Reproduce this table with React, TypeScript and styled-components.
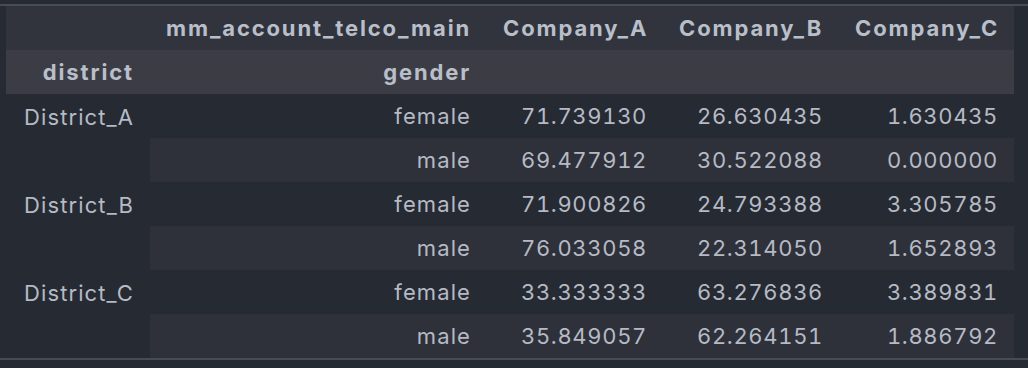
import styled, { createGlobalStyle } from 'styled-components';

const GlobalStyle = createGlobalStyle`
  html, body {
    margin: 0;
    background: #262a33;
  }
`;

type Row = {
  district?: string;
  span?: number;
  gender: string;
  values: string[];
};

const columns = ['Company_A', 'Company_B', 'Company_C'];

const rows: Row[] = [
  { district: 'District_A', span: 2, gender: 'female', values: ['71.739130', '26.630435', '1.630435'] },
  { gender: 'male', values: ['69.477912', '30.522088', '0.000000'] },
  { district: 'District_B', span: 2, gender: 'female', values: ['71.900826', '24.793388', '3.305785'] },
  { gender: 'male', values: ['76.033058', '22.314050', '1.652893'] },
  { district: 'District_C', span: 2, gender: 'female', values: ['33.333333', '63.276836', '3.389831'] },
  { gender: 'male', values: ['35.849057', '62.264151', '1.886792'] },
];

export default function App() {
  return (
    <>
      <GlobalStyle />
      <Output>
        <Frame>
          <Table>
            <colgroup>
              <col style={{ width: 144 }} />
              <col style={{ width: 337 }} />
              <col style={{ width: 176 }} />
              <col style={{ width: 176 }} />
              <col style={{ width: 175 }} />
            </colgroup>
            <thead>
              <HeadRow $tone='top'>
                <HeadCell />
                <HeadCell>mm_account_telco_main</HeadCell>
                {columns.map((c) => (
                  <HeadCell key={c}>{c}</HeadCell>
                ))}
              </HeadRow>
              <HeadRow $tone='names'>
                <HeadCell>district</HeadCell>
                <HeadCell>gender</HeadCell>
                <HeadCell />
                <HeadCell />
                <HeadCell />
              </HeadRow>
            </thead>
            <tbody>
              {rows.map((row, i) => (
                <BodyRow key={i} $striped={i % 2 === 1}>
                  {row.district && <IndexCell rowSpan={row.span}>{row.district}</IndexCell>}
                  <DataCell>{row.gender}</DataCell>
                  {row.values.map((v, j) => (
                    <DataCell key={j} $num>
                      {v}
                    </DataCell>
                  ))}
                </BodyRow>
              ))}
            </tbody>
          </Table>
        </Frame>
      </Output>
    </>
  );
}

const Output = styled.div`
  width: 1028px;
  height: 368px;
  box-sizing: border-box;
  padding-top: 4px;
  font-family: Inter, 'Liberation Sans', sans-serif;
`;

const Frame = styled.div`
  border-top: 2px solid #474b57;
  border-bottom: 2px solid #474b57;
  padding-left: 6px;
`;

const Table = styled.table`
  border-collapse: collapse;
  border-spacing: 0;
  table-layout: fixed;
  width: 1008px;
`;

const HeadRow = styled.tr<{ $tone: 'top' | 'names' }>`
  height: 44px;
  background: ${(p) => (p.$tone === 'top' ? '#31343d' : '#3c3d44')};
`;

const HeadCell = styled.th`
  padding: 0 16px;
  text-align: right;
  font-size: 22px;
  font-weight: 700;
  letter-spacing: 0.085em;
  color: #b9bfca;
  white-space: nowrap;
`;

const BodyRow = styled.tr<{ $striped: boolean }>`
  height: 44px;
  background: ${(p) => (p.$striped ? '#2e3139' : 'transparent')};
`;

const IndexCell = styled.th`
  padding: 0 16px;
  text-align: right;
  vertical-align: top;
  padding-top: 10px;
  font-size: 22px;
  font-weight: 400;
  letter-spacing: 0.05em;
  color: #b5bac5;
  background: #262a33;
  white-space: nowrap;
`;

const DataCell = styled.td<{ $num?: boolean }>`
  padding: 0 16px;
  text-align: right;
  font-size: 22px;
  letter-spacing: ${(p) => (p.$num ? '0.03em' : '0.05em')};
  font-variant-numeric: tabular-nums;
  color: #b5bac5;
  white-space: nowrap;
`;
